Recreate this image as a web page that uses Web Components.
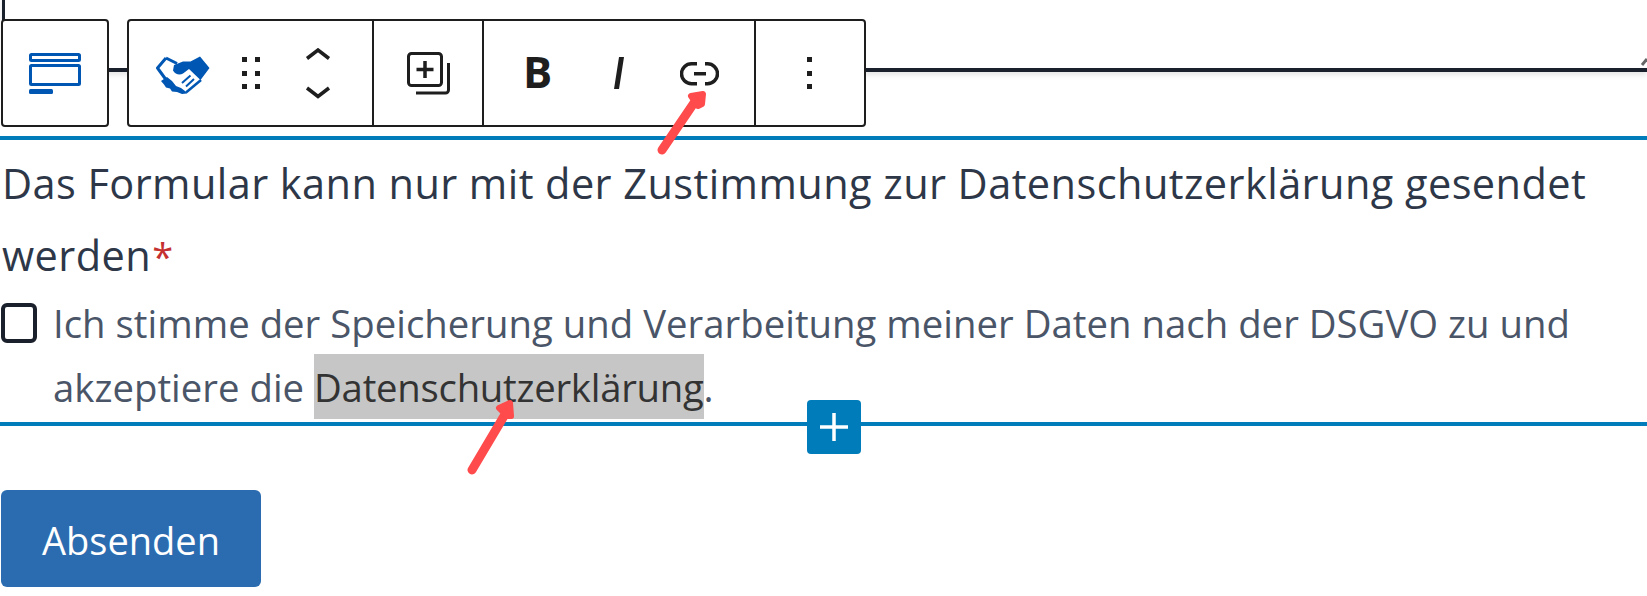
<!DOCTYPE html>
<html lang="de">
<head>
<meta charset="utf-8">
<title>Formular</title>
<style>
  html, body { margin: 0; background: #fff; }
  body { width: 1647px; height: 596px; overflow: hidden; font-family: "Open Sans", "Noto Sans", sans-serif; position: relative; }
</style>
</head>
<body>
<form-textarea-edge></form-textarea-edge>
<block-toolbar></block-toolbar>
<selected-block>
  <form-legend>Das Formular kann nur mit der Zustimmung zur Datenschutzerklärung gesendet werden</form-legend>
  <consent-check>Ich stimme der Speicherung und Verarbeitung meiner Daten nach der DSGVO zu und akzeptiere die <mark>Datenschutzerklärung</mark>.</consent-check>
</selected-block>
<submit-button>Absenden</submit-button>
<red-arrows></red-arrows>

<script>
'use strict';

// ── kleine Helfer ──
const el = (tag, html) => {
    customElements.define(tag, class extends HTMLElement {
        constructor() {
            super();
            this.attachShadow({ mode: 'open' }).innerHTML = html;
        }
    });
};

// Unterkante des Textfelds darüber, liegt hinter der Toolbar
el('form-textarea-edge', `<style>
  :host { position: absolute; left: 2px; top: -4px; right: 0; height: 76px; box-sizing: border-box;
          border-left: 3px solid #1a202c; border-bottom: 4px solid #1a202c;
          box-shadow: 0 3px 5px rgba(0,0,0,.1); }
  svg { position: absolute; right: 0; bottom: 2px; }
</style>
<svg width="14" height="14" viewBox="0 0 14 14"><path d="M9 13 14 7" stroke="#666" stroke-width="3" fill="none"/></svg>`);

el('block-toolbar', `<style>
  :host { display: flex; position: relative; align-items: stretch; gap: 18px; padding: 19px 0 0 1px; height: 108px; }
  .box { display: flex; background: #fff; border: 2px solid #1e1e1e; border-radius: 4px; box-sizing: border-box; height: 108px; }
  .type { width: 108px; justify-content: center; align-items: center; }
  .main { width: 739px; }
  .grp { display: flex; align-items: center; border-right: 2px solid #1e1e1e; box-sizing: border-box; position: relative; }
  .grp:last-child { border-right: 0; }
  .g1 { width: 245px; } .g2 { width: 110px; } .g3 { width: 272px; } .g4 { flex: 1; }
  svg { display: block; position: absolute; }
  .b { position: absolute; font: 700 43.500px "Open Sans", sans-serif; color: #1e1e1e; left: 39px; top: 21px; line-height: 60px; }
</style>
<div class="box type">
  <svg style="position:static" width="52" height="41" viewBox="0 0 52 41">
    <rect x="1.500" y="1.500" width="49" height="6" fill="none" stroke="#0057b3" stroke-width="3" rx="1"/>
    <rect x="1.500" y="12.500" width="49" height="19" fill="none" stroke="#0057b3" stroke-width="3" rx="1"/>
    <rect x="0" y="36" width="24" height="5" fill="#0057b3" rx="1.500"/>
  </svg>
</div>
<div class="box main">
  <div class="grp g1">
    <svg style="left:27px;top:35px" width="54" height="38" viewBox="0 0 54 38">
      <path d="M10 2 1.500 12 9.500 23M10 2 21 7.500" fill="none" stroke="#0057b3" stroke-width="3" stroke-linejoin="round"/>
      <path d="M18 9 27 5.500h7.500L44 .5 53.500 12 44.500 24 33 13l-6 4.500c-3 2-8 1-10-3Z" fill="#0057b3"/>
      <path d="M5 25l6-4 5 4 4 5 5 2 4 3 2 2.500-5 .5-5-2-5-.5-2-3-4-1-2-3Z" fill="#0057b3"/>
      <path d="M30 36.500 45 24" fill="none" stroke="#0057b3" stroke-width="2.500"/>
      <path d="M30 30.500 38 23M26 27 34.500 19.500" stroke="#0057b3" stroke-width="2" fill="none"/>
    </svg>
    <svg style="left:113px;top:36px" width="20" height="34" viewBox="0 0 20 34" fill="#1e1e1e">
      <rect x="0" y="0" width="5" height="5"/><rect x="13" y="0" width="5" height="5"/>
      <rect x="0" y="14" width="5" height="5"/><rect x="13" y="14" width="5" height="5"/>
      <rect x="0" y="27" width="5" height="5"/><rect x="13" y="27" width="5" height="5"/>
    </svg>
    <svg style="left:176px;top:27px" width="28" height="52" viewBox="0 0 28 52" fill="none" stroke="#1e1e1e" stroke-width="3.500">
      <path d="M2 10.500 13 2l11 8.500M2 40l11 8.500L24 40"/>
    </svg>
  </div>
  <div class="grp g2">
    <svg style="left:33px;top:31px" width="44" height="44" viewBox="0 0 44 44" fill="none" stroke="#1e1e1e" stroke-width="3">
      <rect x="1.500" y="1.500" width="33" height="32" rx="3"/>
      <path d="M18 9v17M9.500 17.500h17" stroke-width="3.500"/>
      <path d="M41.500 11v27a3 3 0 0 1-3 3H9"/>
    </svg>
  </div>
  <div class="grp g3">
    <span class="b">B</span>
    <svg style="left:130px;top:36px" width="10" height="32" viewBox="0 0 10 32"><path d="M5 0H10L5 32H0Z" fill="#1e1e1e"/></svg>
    <svg style="left:196px;top:41px" width="39" height="24" viewBox="0 0 39 24" fill="none" stroke="#1e1e1e" stroke-width="3.500">
      <path d="M17 1.750H11.500a10 10 0 0 0 0 20H17M25 1.750h2.500a10 10 0 0 1 0 20H25"/>
      <path d="M14 11.750H26"/>
    </svg>
  </div>
  <div class="grp g4">
    <svg style="left:49px;top:36px" width="10" height="34" viewBox="0 0 10 34" fill="#1e1e1e">
      <rect x="2" y="0" width="5" height="5"/><rect x="2" y="14" width="5" height="5"/><rect x="2" y="27" width="5" height="5"/>
    </svg>
  </div>
</div>`);

el('selected-block', `<style>
  :host { display: block; position: relative; margin-top: 9px; height: 290px; box-sizing: border-box;
          border-top: 4px solid #007cba; border-bottom: 4px solid #007cba; padding-left: 2px; }
  button { position: absolute; left: 807px; bottom: -32px; width: 54px; height: 54px; padding: 0; border: 0;
           background: #007cba; border-radius: 4px; display: flex; align-items: center; justify-content: center; }
</style>
<slot></slot>
<button aria-label="Block hinzufügen"><svg width="28" height="28" viewBox="0 0 28 28"><path d="M14 0v28M0 14h28" stroke="#fff" stroke-width="3.500"/></svg></button>`);

el('form-legend', `<style>
  :host { display: block; font-size: 41.500px; letter-spacing: .43px; line-height: 72px; color: #2d3748; width: 1600px; padding-top: 7px; }
  .req { color: #c53030; margin-left: 1px; font-size: 38px; }
</style><slot></slot><span class="req">*</span>`);

el('consent-check', `<style>
  :host { display: flex; gap: 16px; margin: -1px 0 0 -1px; font-size: 38.300px; letter-spacing: .02px; line-height: 64px; color: #4a5568; }
  .cb { flex: none; width: 36px; height: 40px; margin-top: 12px; border: 4px solid #1a202c; border-radius: 6px; box-sizing: border-box; }
  .t { width: 1560px; }
  ::slotted(mark) { display: inline-block; padding-top: 1px; margin-top: -1px; letter-spacing: -.25px; background: #c6c6c6; color: #333; }
</style><div class="cb"></div><div class="t"><slot></slot></div>`);

el('submit-button', `<style>
  :host { display: block; margin: 64px 0 0 1px; width: 260px; height: 97px; background: #2b6cb0; border-radius: 6px;
          color: #fff; font-size: 38px; line-height: 101px; text-align: center; }
</style><slot></slot>`);

// rote Pfeile der Anmerkung
el('red-arrows', `<style>
  :host { position: absolute; inset: 0; pointer-events: none; }
  svg { position: absolute; left: 0; top: 0; }
</style>
<svg width="1647" height="596" viewBox="0 0 1647 596" fill="none" stroke="#ff4b4b" stroke-linecap="round">
  <path d="M662 150 698 97" stroke-width="9"/>
  <path d="M691 96 703 94 702 104 698 106 Z" fill="#ff4b4b" stroke-width="6" stroke-linejoin="round"/>
  <path d="M472 470 507 411" stroke-width="9"/>
  <path d="M499 408 510 403 511 416 507 416 Z" fill="#ff4b4b" stroke-width="6" stroke-linejoin="round"/>
</svg>`);
</script>
</body>
</html>
